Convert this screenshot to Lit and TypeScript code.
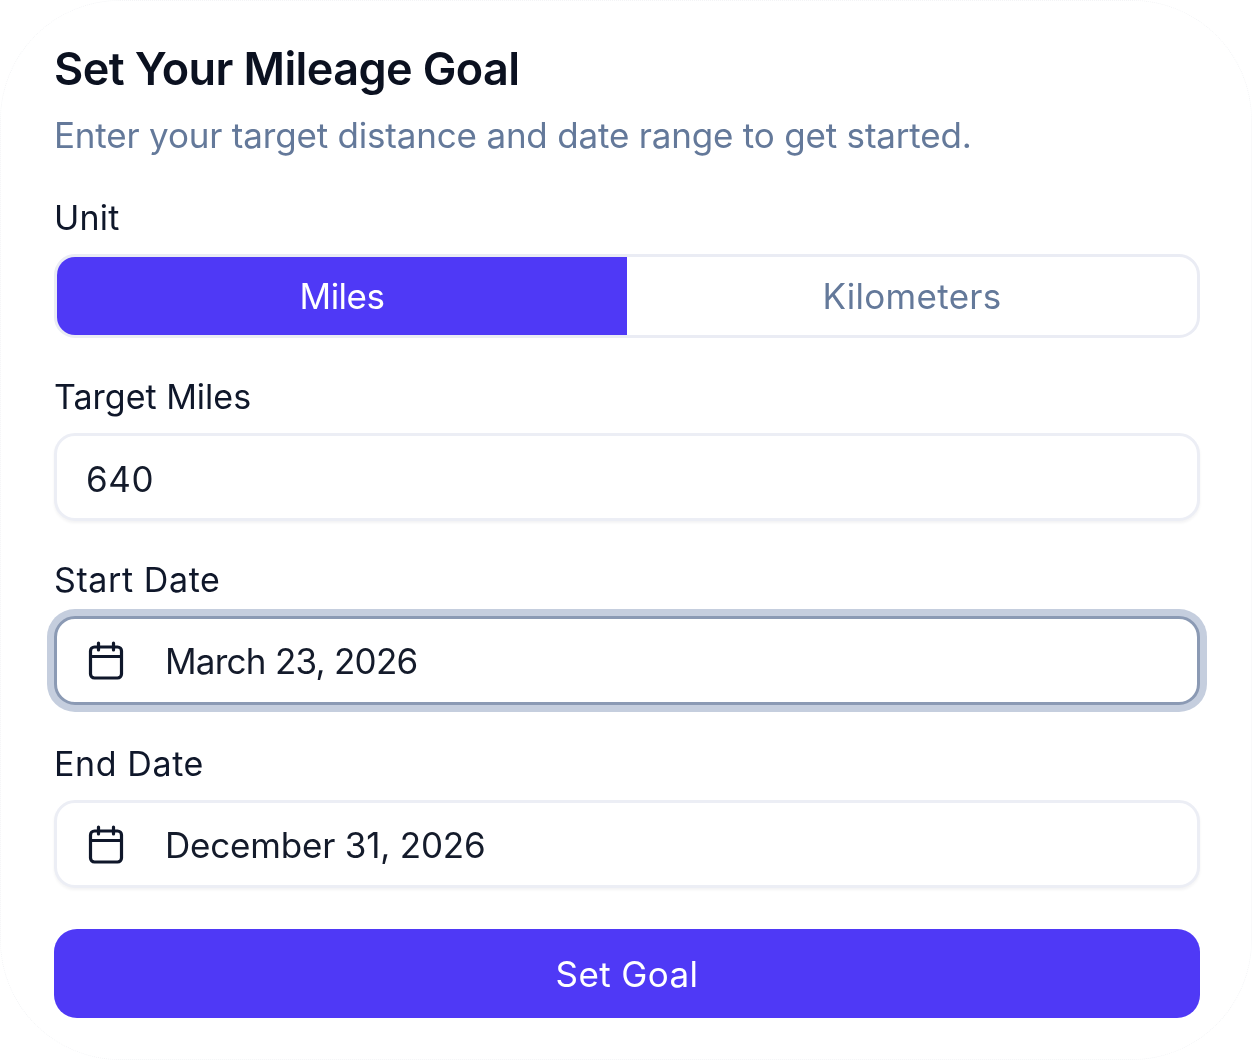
import { LitElement, html, css, svg } from "lit";
import { customElement } from "lit/decorators.js";

const cal = html`<svg class="cal" viewBox="0 0 36 40" fill="none" stroke="#0f172a" stroke-width="3.2" stroke-linecap="round" stroke-linejoin="round">
  ${svg`<rect x="2.5" y="6" width="31" height="31" rx="4"></rect><path d="M2.5 15.5H33.5M10.5 2V9M25.5 2V9"></path>`}
</svg>`;

@customElement("app-root")
export class AppRoot extends LitElement {
  static styles = css`
    :host { display: block; width: 1252px; height: 1060px; background: #fff; font-family: Inter, "Liberation Sans", sans-serif; color: #0f172a; overflow: hidden; }
    .card { box-sizing: border-box; width: 1252px; height: 1060px; border-radius: 120px; border: 1px dotted #f3f4f6; padding: 41px 51px 0 53px; display: flex; flex-direction: column; filter: blur(0.45px); }
    h1 { margin: 0; font-size: 45px; line-height: 54px; font-weight: 600; letter-spacing: -0.6px; color: #0b1120; }
    .sub { margin: 13px 0 0; font-size: 35px; line-height: 52px; color: #64799a; letter-spacing: -0.19px; }
    .label { font-size: 34px; line-height: 44px; font-weight: 400; color: #0f172a; }
    .l1 { margin-top: 35px; letter-spacing: 0.2px; }
    .l2 { margin-top: 37px; letter-spacing: 0; }
    .l3 { margin-top: 37px; letter-spacing: 0.6px; }
    .l4 { margin-top: 37px; letter-spacing: 0.6px; }
    .toggle { margin-top: 14px; height: 84px; box-sizing: border-box; border: 3px solid #eaecf4; border-radius: 21px; display: grid; grid-template-columns: 1fr 1fr; overflow: hidden; font-size: 35px; }
    .toggle div { display: flex; align-items: center; justify-content: center; color: #64799a; letter-spacing: 0.3px; }
    .toggle .on { background: #4f39f6; color: #fff; letter-spacing: -0.5px; }
    .field { margin-top: 14px; box-sizing: border-box; height: 88px; border: 3px solid #eceef5; border-radius: 21px; background: #fff; display: flex; align-items: center; padding-left: 31px; font-size: 35px; color: #141b2b; box-shadow: 0 2px 3px rgba(15, 23, 42, 0.05); }
    .field.plain { padding-left: 29px; padding-top: 3px; letter-spacing: 0.6px; }
    .field.focus { height: 89px; padding-top: 1px; border-color: #8b9ab4; box-shadow: 0 0 0 7px #c5cede; letter-spacing: -0.75px; }
    .field.end { letter-spacing: -0.2px; padding-top: 1px; }
    .cal { width: 36px; height: 40px; margin-right: 41px; flex: none; }
    button { margin-top: 41px; height: 89px; border: 0; border-radius: 23px; background: #4f39f6; color: #fff; font: inherit; font-size: 35px; letter-spacing: 0.4px; padding: 0; }
  `;

  render() {
    return html`<div class="card">
      <h1>Set Your Mileage Goal</h1>
      <p class="sub">Enter your target distance and date range to get started.</p>
      <div class="label l1">Unit</div>
      <div class="toggle"><div class="on">Miles</div><div>Kilometers</div></div>
      <div class="label l2">Target Miles</div>
      <div class="field plain">640</div>
      <div class="label l3">Start Date</div>
      <div class="field focus">${cal}March 23, 2026</div>
      <div class="label l4">End Date</div>
      <div class="field end">${cal}December 31, 2026</div>
      <button>Set Goal</button>
    </div>`;
  }
}
